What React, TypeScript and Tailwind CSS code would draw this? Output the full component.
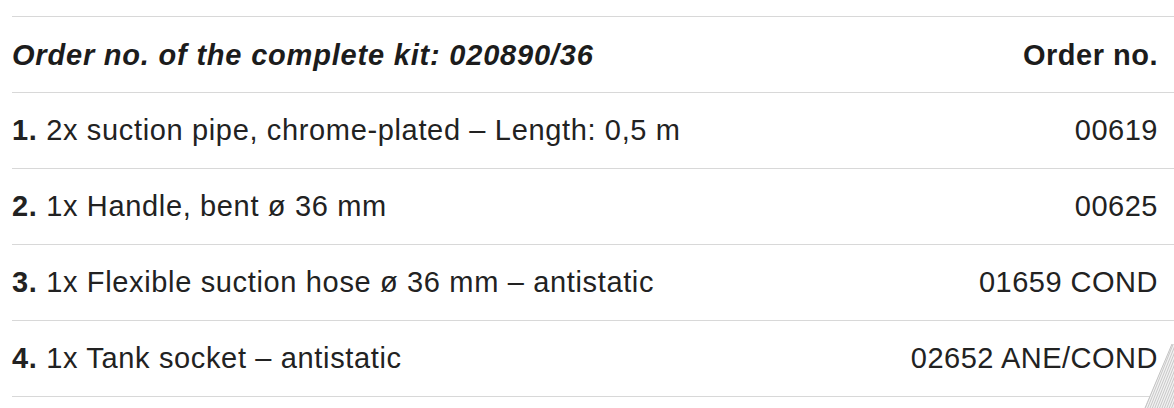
import React from "react";

const rows = [
  { n: "1.", text: "2x suction pipe, chrome-plated – Length: 0,5 m", no: "00619" },
  { n: "2.", text: "1x Handle, bent ø 36 mm", no: "00625" },
  { n: "3.", text: "1x Flexible suction hose ø 36 mm – antistatic", no: "01659 COND" },
  { n: "4.", text: "1x Tank socket – antistatic", no: "02652 ANE/COND" },
];

function Hatch() {
  const lines = [];
  for (let i = 0; i < 14; i++) {
    const x = 1142 + i * 2.4;
    lines.push(<line key={i} x1={x} y1={410} x2={x + 28} y2={340} stroke="#bdbdbd" strokeWidth={0.8} />);
  }
  return (
    <svg className="absolute left-0 top-0 pointer-events-none" width={1174} height={408}>
      <defs>
        <clipPath id="wedge">
          <polygon points="1172,344 1174,344 1174,408 1145,408" />
        </clipPath>
      </defs>
      <g clipPath="url(#wedge)">
        <rect x={1140} y={340} width={40} height={70} fill="#f2f2f2" />
        {lines}
      </g>
      <line x1={1172} y1={344} x2={1145} y2={408} stroke="#c4c4c4" strokeWidth={1} />
    </svg>
  );
}

export default function App() {
  return (
    <div
      className="relative w-[1174px] h-[408px] bg-white overflow-hidden text-[#222]"
      style={{ fontFamily: '"Liberation Sans", Arial, Helvetica, sans-serif' }}
    >
      <div className="pt-4 pl-3">
        <div className="border-t border-[#d8d8d8]">
          <div className="flex items-center justify-between h-[76px] border-b border-[#d8d8d8] pr-4 pt-[3px] text-[29px] tracking-[0.8px] font-bold text-[#1c1c1c]">
            <span className="italic">Order no. of the complete kit: 020890/36</span>
            <span className="tracking-[0.5px]">Order no.</span>
          </div>
          {rows.map((r) => (
            <div
              key={r.n}
              className="flex items-center justify-between h-[76px] border-b border-[#d8d8d8] pr-4 pt-[1px] text-[29px] tracking-[0.65px]"
            >
              <span>
                <span className="font-bold">{r.n}</span> {r.text}
              </span>
              <span className="tracking-[0.5px]">{r.no}</span>
            </div>
          ))}
        </div>
      </div>
      <Hatch />
    </div>
  );
}
